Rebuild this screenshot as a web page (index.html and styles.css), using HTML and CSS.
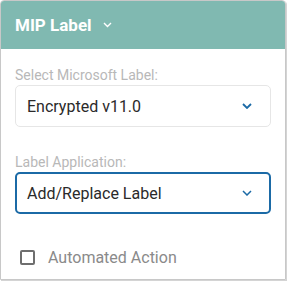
FILE: index.html
```
<html>
<head>
  <meta name=viewport content='width=287' />
  <link rel="stylesheet" href="styles.css">
</head>
<body>
<div class="panel">
  <div class="panel-head">
    <span class="panel-title">MIP Label</span>
    <svg class="head-chevron" width="9" height="6" viewBox="0 0 9 6"><path d="M1 1 L4.5 4.5 L8 1" fill="none" stroke="#fff" stroke-width="1.4"/></svg>
  </div>
  <div class="panel-body">
    <div class="field">
      <div class="field-label">Select Microsoft Label:</div>
      <div class="select">
        <span>Encrypted v11.0</span>
        <svg width="10" height="6" viewBox="0 0 10 6"><path d="M1 1 L5 5 L9 1" fill="none" stroke="#1b6aa6" stroke-width="1.8"/></svg>
      </div>
    </div>
    <div class="field">
      <div class="field-label">Label Application:</div>
      <div class="select focused">
        <span>Add/Replace Label</span>
        <svg width="10" height="6" viewBox="0 0 10 6"><path d="M1 1 L5 5 L9 1" fill="none" stroke="#1b6aa6" stroke-width="1.5"/></svg>
      </div>
    </div>
    <label class="check">
      <span class="box"></span>
      <span>Automated Action</span>
    </label>
  </div>
</div>
</body>
</html>
```
FILE: styles.css
```
body {
  margin: 0;
  font-family: Roboto, "Liberation Sans", sans-serif;
  background: #fff;
}
.panel {
  box-sizing: border-box;
  width: 286px;
  height: 280px;
  border: 1px solid #c8c8c8;
  border-radius: 4px 4px 0 0;
  box-shadow: 1px 1px 0 #d4d4d4;
  overflow: hidden;
}
.panel-head {
  height: 48px;
  background: #80b9b1;
  display: flex;
  align-items: center;
  padding-left: 14px;
  gap: 11px;
}
.panel-title {
  color: #fff;
  font-size: 17px;
  font-weight: bold;
}
.panel-body {
  padding: 0 14px;
}
.field {
  margin-top: 18px;
}
.field + .field {
  margin-top: 27px;
}
.field-label {
  font-size: 14px;
  line-height: 16px;
  color: #b8b8b8;
  margin-bottom: 2px;
}
.select {
  box-sizing: border-box;
  height: 42px;
  width: 256px;
  border: 1px solid #e6e6e6;
  border-radius: 5px;
  display: flex;
  align-items: center;
  justify-content: space-between;
  padding: 0 18px 0 11px;
  font-size: 16px;
  color: #2a2a2a;
}
.select.focused {
  border: 2px solid #1b6aa6;
  padding: 0 17px 0 10px;
}
.check {
  display: flex;
  align-items: center;
  margin-top: 34px;
  margin-left: 5px;
  font-size: 16px;
  color: #8a8a8a;
}
.box {
  box-sizing: border-box;
  width: 15px;
  height: 15px;
  border: 2px solid #6e6e6e;
  border-radius: 2px;
  margin-right: 13px;
}
```
